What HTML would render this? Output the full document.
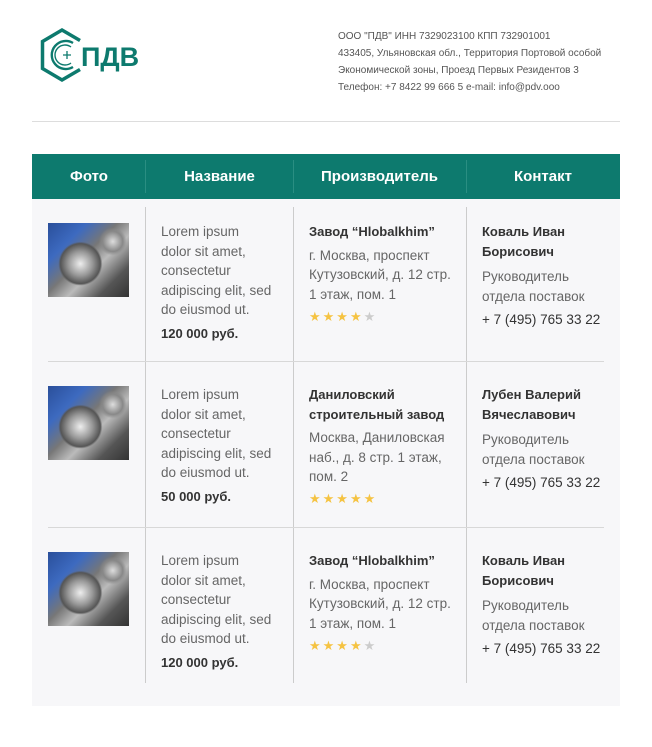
<!DOCTYPE html>
<html><head><meta charset="utf-8"><style>
*{margin:0;padding:0;box-sizing:border-box}
body{width:652px;height:747px;background:#fff;font-family:"Liberation Sans","DejaVu Sans",sans-serif;position:relative;overflow:hidden;color:#333}
.a{position:absolute}
.info{left:338px;top:28px;font-size:10px;line-height:17px;color:#555}
.hd{left:32px;top:154px;width:588px;height:45px;background:#0d7a6e}
.hd div{position:absolute;top:0;height:45px;line-height:46px;color:#fff;font-weight:bold;font-size:15px;text-align:center}
.hsep{position:absolute;top:6px;width:1px;height:33px;background:#2a8e82}
.body{left:32px;top:199px;width:588px;height:507px;background:#f7f7f9}
.vl{position:absolute;width:1px;background:#ccc;top:207px;height:476px}
.hl{position:absolute;left:48px;width:556px;height:1px;background:#d8d8d8}
.t{position:absolute;font-size:13.5px;line-height:19.5px;color:#666}
.t div{display:block}
.b{font-weight:bold;color:#333;font-size:13px}
.m{margin-top:4px}
.img{position:absolute;width:81px;height:74px;left:48px;background:
radial-gradient(circle at 40% 55%,#eee 0,#999 12px,#555 20px,transparent 22px),
radial-gradient(circle at 80% 25%,#ddd 0,#888 10px,transparent 14px),
linear-gradient(135deg,#2a4f9a 0,#3d6ac0 25%,#777 45%,#bbb 60%,#555 80%,#333 100%)}
.st{position:absolute;font-size:13px;color:#f5c342;letter-spacing:2px}
.st i{font-style:normal;color:#ccc}
</style></head><body>
<svg class="a" style="left:40px;top:26px" width="112" height="60" viewBox="0 0 112 60">
<path d="M40,14.5 L22,4 L2.5,15.5 L2.5,42.5 L22,54 L40,43.5" stroke="#0d7a6e" stroke-width="3.5" fill="none" stroke-linejoin="miter"/>
<path d="M33,17 A14 14 0 1 0 33 41" stroke="#0d7a6e" stroke-width="2.4" fill="none"/>
<path d="M31,21 A10 10 0 1 0 31 37" stroke="#0d7a6e" stroke-width="1.4" fill="none"/>
<path d="M27 25v8M23 29h8" stroke="#0d7a6e" stroke-width="1.3"/>
<text x="41" y="40" font-family="Liberation Sans" font-weight="bold" font-size="27" fill="#0d7a6e">ПДВ</text>
</svg>
<div class="a info">ООО "ПДВ" ИНН 7329023100 КПП 732901001<br>433405, Ульяновская обл., Территория Портовой особой<br>Экономической зоны, Проезд Первых Резидентов 3<br>Телефон: +7 8422 99 666 5 e-mail: info@pdv.ooo</div>
<div class="a" style="left:32px;top:121px;width:588px;height:1px;background:#ddd"></div>
<div class="a hd">
<div style="left:0;width:114px">Фото</div>
<div style="left:114px;width:147px">Название</div>
<div style="left:261px;width:173px">Производитель</div>
<div style="left:434px;width:154px">Контакт</div>
<span class="hsep" style="left:113px"></span><span class="hsep" style="left:261px"></span><span class="hsep" style="left:434px"></span>
</div>
<div class="a body"></div>
<div class="vl" style="left:145px"></div><div class="vl" style="left:293px"></div><div class="vl" style="left:466px"></div>
<div class="hl" style="top:361px"></div><div class="hl" style="top:527px"></div>

<div class="img" style="top:223px"></div>
<div class="t" style="left:161px;top:222px">Lorem ipsum<br>dolor sit amet,<br>consectetur<br>adipiscing elit, sed<br>do eiusmod ut.<div class="b m">120 000 руб.</div></div>
<div class="t" style="left:309px;top:222px"><div class="b">Завод “Hlobalkhim”</div><div class="m">г. Москва, проспект<br>Кутузовский, д. 12 стр.<br>1 этаж, пом. 1</div></div>
<div class="st" style="left:309px;top:309px">★★★★<i>★</i></div>
<div class="t" style="left:482px;top:222px"><div class="b">Коваль Иван<br>Борисович</div><div class="m" style="margin-top:6px">Руководитель<br>отдела поставок</div><div class="m" style="color:#333">+ 7 (495) 765 33 22</div></div>

<div class="img" style="top:386px"></div>
<div class="t" style="left:161px;top:385px">Lorem ipsum<br>dolor sit amet,<br>consectetur<br>adipiscing elit, sed<br>do eiusmod ut.<div class="b m">50 000 руб.</div></div>
<div class="t" style="left:309px;top:385px"><div class="b">Даниловский<br>строительный завод</div><div class="m">Москва, Даниловская<br>наб., д. 8 стр. 1 этаж,<br>пом. 2</div></div>
<div class="st" style="left:309px;top:491px">★★★★★</div>
<div class="t" style="left:482px;top:385px"><div class="b">Лубен Валерий<br>Вячеславович</div><div class="m" style="margin-top:6px">Руководитель<br>отдела поставок</div><div class="m" style="color:#333">+ 7 (495) 765 33 22</div></div>

<div class="img" style="top:552px"></div>
<div class="t" style="left:161px;top:551px">Lorem ipsum<br>dolor sit amet,<br>consectetur<br>adipiscing elit, sed<br>do eiusmod ut.<div class="b m">120 000 руб.</div></div>
<div class="t" style="left:309px;top:551px"><div class="b">Завод “Hlobalkhim”</div><div class="m">г. Москва, проспект<br>Кутузовский, д. 12 стр.<br>1 этаж, пом. 1</div></div>
<div class="st" style="left:309px;top:638px">★★★★<i>★</i></div>
<div class="t" style="left:482px;top:551px"><div class="b">Коваль Иван<br>Борисович</div><div class="m" style="margin-top:6px">Руководитель<br>отдела поставок</div><div class="m" style="color:#333">+ 7 (495) 765 33 22</div></div>
</body></html>
